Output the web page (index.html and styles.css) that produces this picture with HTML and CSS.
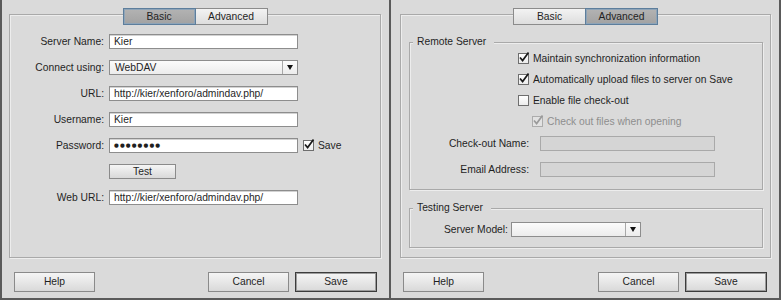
FILE: index.html
```html
<!DOCTYPE html>
<html lang="en">
  <head>
    <meta charset="UTF-8" />
    <title>Site Setup - Servers</title>
    <link rel="stylesheet" href="styles.css">
  </head>
  <body>
    <div class="window">
      <!-- basic tab -->
      <div class="panel panel-basic">
        <div class="tabbox">
          <div class="tabs">
            <div class="tab on">Basic</div>
            <div class="tab">Advanced</div>
          </div>
          <div class="form">
            <div class="label">Server Name:</div>
            <div class="field">Kier</div>
            <div></div>

            <div class="label">Connect using:</div>
            <div class="select">
              <span class="select-text">WebDAV</span>
              <span class="select-arrow"><i></i></span>
            </div>
            <div></div>

            <div class="label">URL:</div>
            <div class="field">http://kier/xenforo/admindav.php/</div>
            <div></div>

            <div class="label">Username:</div>
            <div class="field">Kier</div>
            <div></div>

            <div class="label">Password:</div>
            <div class="field dots">●●●●●●●●</div>
            <div class="opt">
              <span class="check"><svg viewBox="0 0 11 11"><path d="M2 5.5 L4.6 8.6 L10.5 0.5" /></svg></span>
              <span>Save</span>
            </div>

            <div></div>
            <div class="btn btn-test">Test</div>
            <div></div>

            <div class="label">Web URL:</div>
            <div class="field">http://kier/xenforo/admindav.php/</div>
            <div></div>
          </div>
        </div>
        <div class="buttons">
          <div class="btn push">Help</div>
          <div class="btn">Cancel</div>
          <div class="btn default">Save</div>
        </div>
      </div>

      <!-- advanced tab -->
      <div class="panel panel-adv">
        <div class="tabbox">
          <div class="tabs">
            <div class="tab">Basic</div>
            <div class="tab on">Advanced</div>
          </div>

          <div class="group group-remote">
            <div class="legend">Remote Server</div>
            <div class="opts">
              <div class="opt">
                <span class="check"><svg viewBox="0 0 11 11"><path d="M2 5.5 L4.6 8.6 L10.5 0.5" /></svg></span>
                <span>Maintain synchronization information</span>
              </div>
              <div class="opt">
                <span class="check"><svg viewBox="0 0 11 11"><path d="M2 5.5 L4.6 8.6 L10.5 0.5" /></svg></span>
                <span>Automatically upload files to server on Save</span>
              </div>
              <div class="opt">
                <span class="check"></span>
                <span>Enable file check-out</span>
              </div>
              <div class="opt sub">
                <span class="check"><svg viewBox="0 0 11 11"><path d="M2 5.5 L4.6 8.6 L10.5 0.5" /></svg></span>
                <span>Check out files when opening</span>
              </div>
            </div>
            <div class="fields">
              <div class="label">Check-out Name:</div>
              <div class="field disabled"></div>
              <div class="label">Email Address:</div>
              <div class="field disabled"></div>
            </div>
          </div>

          <div class="group group-testing">
            <div class="legend">Testing Server</div>
            <div class="model-row">
              <div class="label">Server Model:</div>
              <div class="select">
                <span class="select-text"></span>
                <span class="select-arrow"><i></i></span>
              </div>
            </div>
          </div>
        </div>
        <div class="buttons">
          <div class="btn push">Help</div>
          <div class="btn">Cancel</div>
          <div class="btn default">Save</div>
        </div>
      </div>
    </div>
  </body>
</html>
```

FILE: styles.css
```css
* {
  margin: 0;
  padding: 0;
  box-sizing: border-box;
}
body {
  font-family: "Liberation Sans", Arial, sans-serif;
  font-size: 10.3px;
  color: #1f1f1f;
  background: #dadada;
}
.window {
  display: flex;
  height: 300px;
  border-bottom: 2px solid #5a5a5a;
}
.panel {
  display: flex;
  flex-direction: column;
  padding-top: 14px;
  border-left: 2px solid #5a5a5a;
}
.panel-basic {
  width: 389px;
}
.panel-adv {
  flex: 1;
  border-right: 2px solid #5a5a5a;
}
.tabbox {
  height: 244px;
  border: 1px solid #a9a9a9;
  box-shadow: inset 1px 1px 0 #ededed, 1px 1px 0 #ededed;
}
.panel-basic .tabbox {
  margin: 0 8px 0 7px;
}
.panel-adv .tabbox {
  margin: 0 8px 0 9px;
}
.tabs {
  display: flex;
  justify-content: center;
  margin-top: -7px;
}
.tab {
  width: 73px;
  height: 17px;
  line-height: 15px;
  text-align: center;
  border: 1px solid #8b8b8b;
  background: linear-gradient(#f3f3f3, #dddddd);
}
.tab + .tab {
  margin-left: -1px;
}
.tab.on {
  position: relative;
  z-index: 1;
  background: linear-gradient(#b3b3b3, #a2a2a2);
  border-color: #5d7e9c;
  box-shadow: inset 0 0 0 1px #8ea4b8;
}
.form {
  display: grid;
  grid-template-columns: 94px 189px auto;
  grid-auto-rows: 15px;
  column-gap: 5px;
  row-gap: 11px;
  margin-top: 9px;
  align-items: center;
}
.label {
  text-align: right;
  white-space: nowrap;
}
.field {
  height: 15px;
  line-height: 13px;
  padding: 0 4px;
  border: 1px solid #8d8d8d;
  background: #fff;
  box-shadow: inset 0 1px 0 #d2d2d2;
  white-space: nowrap;
  overflow: hidden;
}
.field.dots {
  font-family: "DejaVu Sans", sans-serif;
  font-size: 5.5px;
  letter-spacing: 1.1px;
  line-height: 13px;
}
.field.disabled {
  background: #d5d5d5;
  border-color: #a9a9a9;
  box-shadow: none;
}
.select {
  display: flex;
  height: 15px;
  border: 1px solid #8d8d8d;
  background: linear-gradient(#fbfbfb, #ececec);
}
.select-text {
  flex: 1;
  padding-left: 5px;
  line-height: 13px;
}
.select-arrow {
  width: 15px;
  display: flex;
  align-items: center;
  justify-content: center;
  border-left: 1px solid #a8a8a8;
}
.select-arrow i {
  width: 0;
  height: 0;
  border-left: 3px solid transparent;
  border-right: 3px solid transparent;
  border-top: 5px solid #111;
}
.btn {
  height: 15px;
  line-height: 13px;
  text-align: center;
  border: 1px solid #8a8a8a;
  background: linear-gradient(#f5f5f5, #d9d9d9);
}
.btn-test {
  width: 67px;
}
.buttons {
  display: flex;
  gap: 6px;
  margin-top: 14px;
  padding: 0 12px;
}
.buttons .btn {
  width: 81px;
  height: 20px;
  line-height: 18px;
}
.buttons .push {
  margin-right: auto;
}
.buttons .default {
  width: 82px;
  border-color: #3c3c3c;
  box-shadow: inset 0 0 0 1px #9c9c9c;
}
.opt {
  display: flex;
  align-items: center;
  gap: 4px;
  height: 11px;
  white-space: nowrap;
}
.check {
  flex: none;
  width: 11px;
  height: 11px;
  border: 1px solid #6e6e6e;
  background: linear-gradient(#ffffff, #ececec);
}
.check svg {
  display: block;
  width: 11px;
  height: 11px;
  margin: -2px 0 0 -1px;
  overflow: visible;
}
.check path {
  fill: none;
  stroke: #1a1a1a;
  stroke-width: 1.7;
}
.opt.sub {
  padding-left: 14px;
  color: #8e8e8e;
}
.opt.sub .check {
  border-color: #acacac;
  background: #e2e2e2;
}
.opt.sub .check path {
  stroke: #9a9a9a;
}
.group {
  margin: 0 7px 0 8px;
  border: 1px solid #a9a9a9;
  box-shadow: inset 1px 1px 0 #ededed, 1px 1px 0 #ededed;
}
.group-remote {
  margin-top: 17px;
  padding-bottom: 12px;
}
.group-testing {
  margin-top: 18px;
  padding-bottom: 10px;
}
.legend {
  width: max-content;
  height: 12px;
  line-height: 12px;
  margin: -7px 0 0 3px;
  padding: 0 8px 0 4px;
  background: #dadada;
}
.opts {
  display: flex;
  flex-direction: column;
  gap: 10px;
  margin-top: 5px;
  padding-left: 108px;
}
.fields {
  display: grid;
  grid-template-columns: 119px 175px;
  grid-auto-rows: 15px;
  column-gap: 11px;
  row-gap: 11px;
  margin-top: 9px;
  align-items: center;
}
.model-row {
  display: grid;
  grid-template-columns: 98px 130px;
  column-gap: 3px;
  margin-top: 8px;
  align-items: center;
}
```
